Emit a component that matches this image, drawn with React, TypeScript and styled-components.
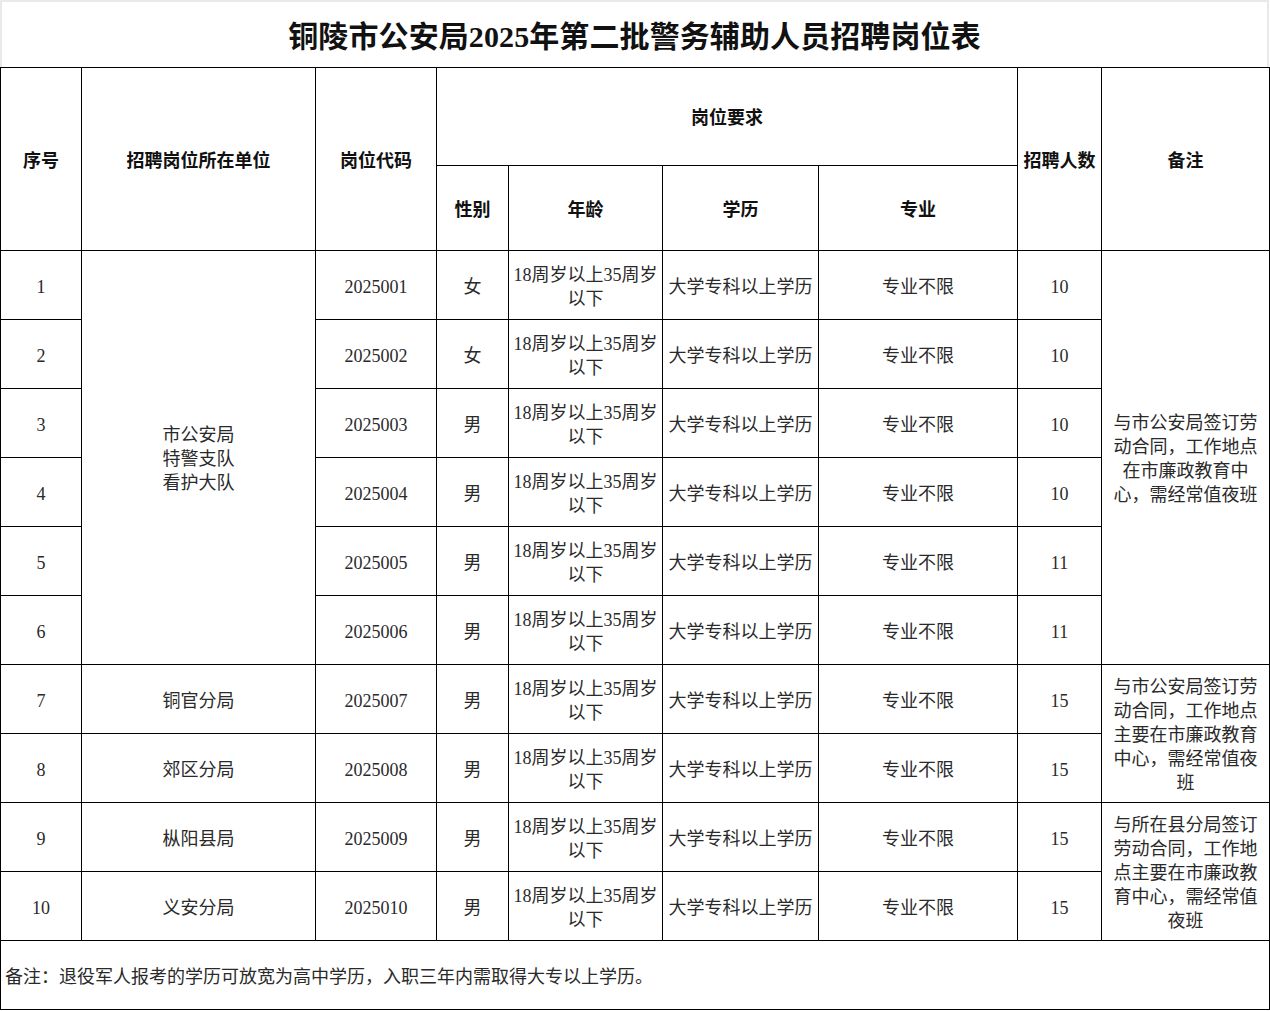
import React from "react";
import styled, { createGlobalStyle } from "styled-components";

const GlobalStyle = createGlobalStyle`
  html, body {
    margin: 0;
    padding: 0;
    background: #ffffff;
  }
  body {
    font-family: "Liberation Serif", "Noto Sans CJK SC", serif;
    color: #222;
  }
`;

const Page = styled.div`
  width: 1269px;
  display: flex;
  flex-direction: column;
`;

const TitleBar = styled.div`
  height: 67px;
  box-sizing: border-box;
  border: 2px solid #e9e9e9;
  border-bottom: none;
  display: flex;
  align-items: center;
  justify-content: center;
`;

const Title = styled.h1`
  margin: 0;
  padding-bottom: 2px;
  font-family: "Liberation Serif", "Noto Sans CJK SC", serif;
  font-size: 30px;
  font-weight: 700;
  color: #111;
  letter-spacing: 0.1px;
`;

const Table = styled.table`
  width: 1269px;
  border-collapse: collapse;
  table-layout: fixed;
`;

const HeadCell = styled.th<{ $h?: number }>`
  border: 1px solid #000;
  height: ${(p) => p.$h ?? 0}px;
  padding: 3px 0 0;
  box-sizing: border-box;
  font-family: "Liberation Serif", "Noto Sans CJK SC", serif;
  font-size: 18px;
  font-weight: 700;
  color: #111;
  text-align: center;
  vertical-align: middle;
  line-height: 24px;
`;

const Cell = styled.td<{ $pad?: number }>`
  border: 1px solid #000;
  height: 69px;
  padding: 3px ${(p) => p.$pad ?? 4}px 0;
  box-sizing: border-box;
  font-family: "Liberation Serif", "Noto Sans CJK SC", serif;
  font-size: 18px;
  font-weight: 400;
  color: #2a2a2a;
  text-align: center;
  vertical-align: middle;
  line-height: 24px;
`;

const NoteCell = styled.td`
  border: 1px solid #000;
  height: 69px;
  padding: 3px 4px 0;
  box-sizing: border-box;
  font-family: "Liberation Serif", "Noto Sans CJK SC", serif;
  font-size: 18px;
  color: #2a2a2a;
  text-align: left;
  vertical-align: middle;
  line-height: 24px;
`;

const cols = [81, 234, 121, 72, 154, 156, 199, 84, 168];

type Row = {
  no: number;
  unit?: { text: string[]; span: number };
  code: string;
  sex: string;
  count: number;
  remark?: { text: string; span: number };
};

const rows: Row[] = [
  {
    no: 1,
    unit: { text: ["市公安局", "特警支队", "看护大队"], span: 6 },
    code: "2025001",
    sex: "女",
    count: 10,
    remark: {
      text: "与市公安局签订劳动合同，工作地点在市廉政教育中心，需经常值夜班",
      span: 6,
    },
  },
  { no: 2, code: "2025002", sex: "女", count: 10 },
  { no: 3, code: "2025003", sex: "男", count: 10 },
  { no: 4, code: "2025004", sex: "男", count: 10 },
  { no: 5, code: "2025005", sex: "男", count: 11 },
  { no: 6, code: "2025006", sex: "男", count: 11 },
  {
    no: 7,
    unit: { text: ["铜官分局"], span: 1 },
    code: "2025007",
    sex: "男",
    count: 15,
    remark: {
      text: "与市公安局签订劳动合同，工作地点主要在市廉政教育中心，需经常值夜班",
      span: 2,
    },
  },
  { no: 8, unit: { text: ["郊区分局"], span: 1 }, code: "2025008", sex: "男", count: 15 },
  {
    no: 9,
    unit: { text: ["枞阳县局"], span: 1 },
    code: "2025009",
    sex: "男",
    count: 15,
    remark: {
      text: "与所在县分局签订劳动合同，工作地点主要在市廉政教育中心，需经常值夜班",
      span: 2,
    },
  },
  { no: 10, unit: { text: ["义安分局"], span: 1 }, code: "2025010", sex: "男", count: 15 },
];

export default function App() {
  return (
    <>
      <GlobalStyle />
      <Page>
        <TitleBar>
          <Title>铜陵市公安局2025年第二批警务辅助人员招聘岗位表</Title>
        </TitleBar>
        <Table>
          <colgroup>
            {cols.map((w, i) => (
              <col key={i} style={{ width: w }} />
            ))}
          </colgroup>
          <thead>
            <tr>
              <HeadCell rowSpan={2} $h={98}>序号</HeadCell>
              <HeadCell rowSpan={2}>招聘岗位所在单位</HeadCell>
              <HeadCell rowSpan={2}>岗位代码</HeadCell>
              <HeadCell colSpan={4} $h={98}>岗位要求</HeadCell>
              <HeadCell rowSpan={2}>招聘人数</HeadCell>
              <HeadCell rowSpan={2}>备注</HeadCell>
            </tr>
            <tr>
              <HeadCell $h={85}>性别</HeadCell>
              <HeadCell>年龄</HeadCell>
              <HeadCell>学历</HeadCell>
              <HeadCell>专业</HeadCell>
            </tr>
          </thead>
          <tbody>
            {rows.map((r) => (
              <tr key={r.no}>
                <Cell>{r.no}</Cell>
                {r.unit && (
                  <Cell rowSpan={r.unit.span}>
                    {r.unit.text.map((t, i) => (
                      <div key={i}>{t}</div>
                    ))}
                  </Cell>
                )}
                <Cell>{r.code}</Cell>
                <Cell>{r.sex}</Cell>
                <Cell>18周岁以上35周岁以下</Cell>
                <Cell $pad={2}>大学专科以上学历</Cell>
                <Cell>专业不限</Cell>
                <Cell>{r.count}</Cell>
                {r.remark && (
                  <Cell rowSpan={r.remark.span} $pad={7}>
                    {r.remark.text}
                  </Cell>
                )}
              </tr>
            ))}
            <tr>
              <NoteCell colSpan={9}>
                备注：退役军人报考的学历可放宽为高中学历，入职三年内需取得大专以上学历。
              </NoteCell>
            </tr>
          </tbody>
        </Table>
      </Page>
    </>
  );
}
